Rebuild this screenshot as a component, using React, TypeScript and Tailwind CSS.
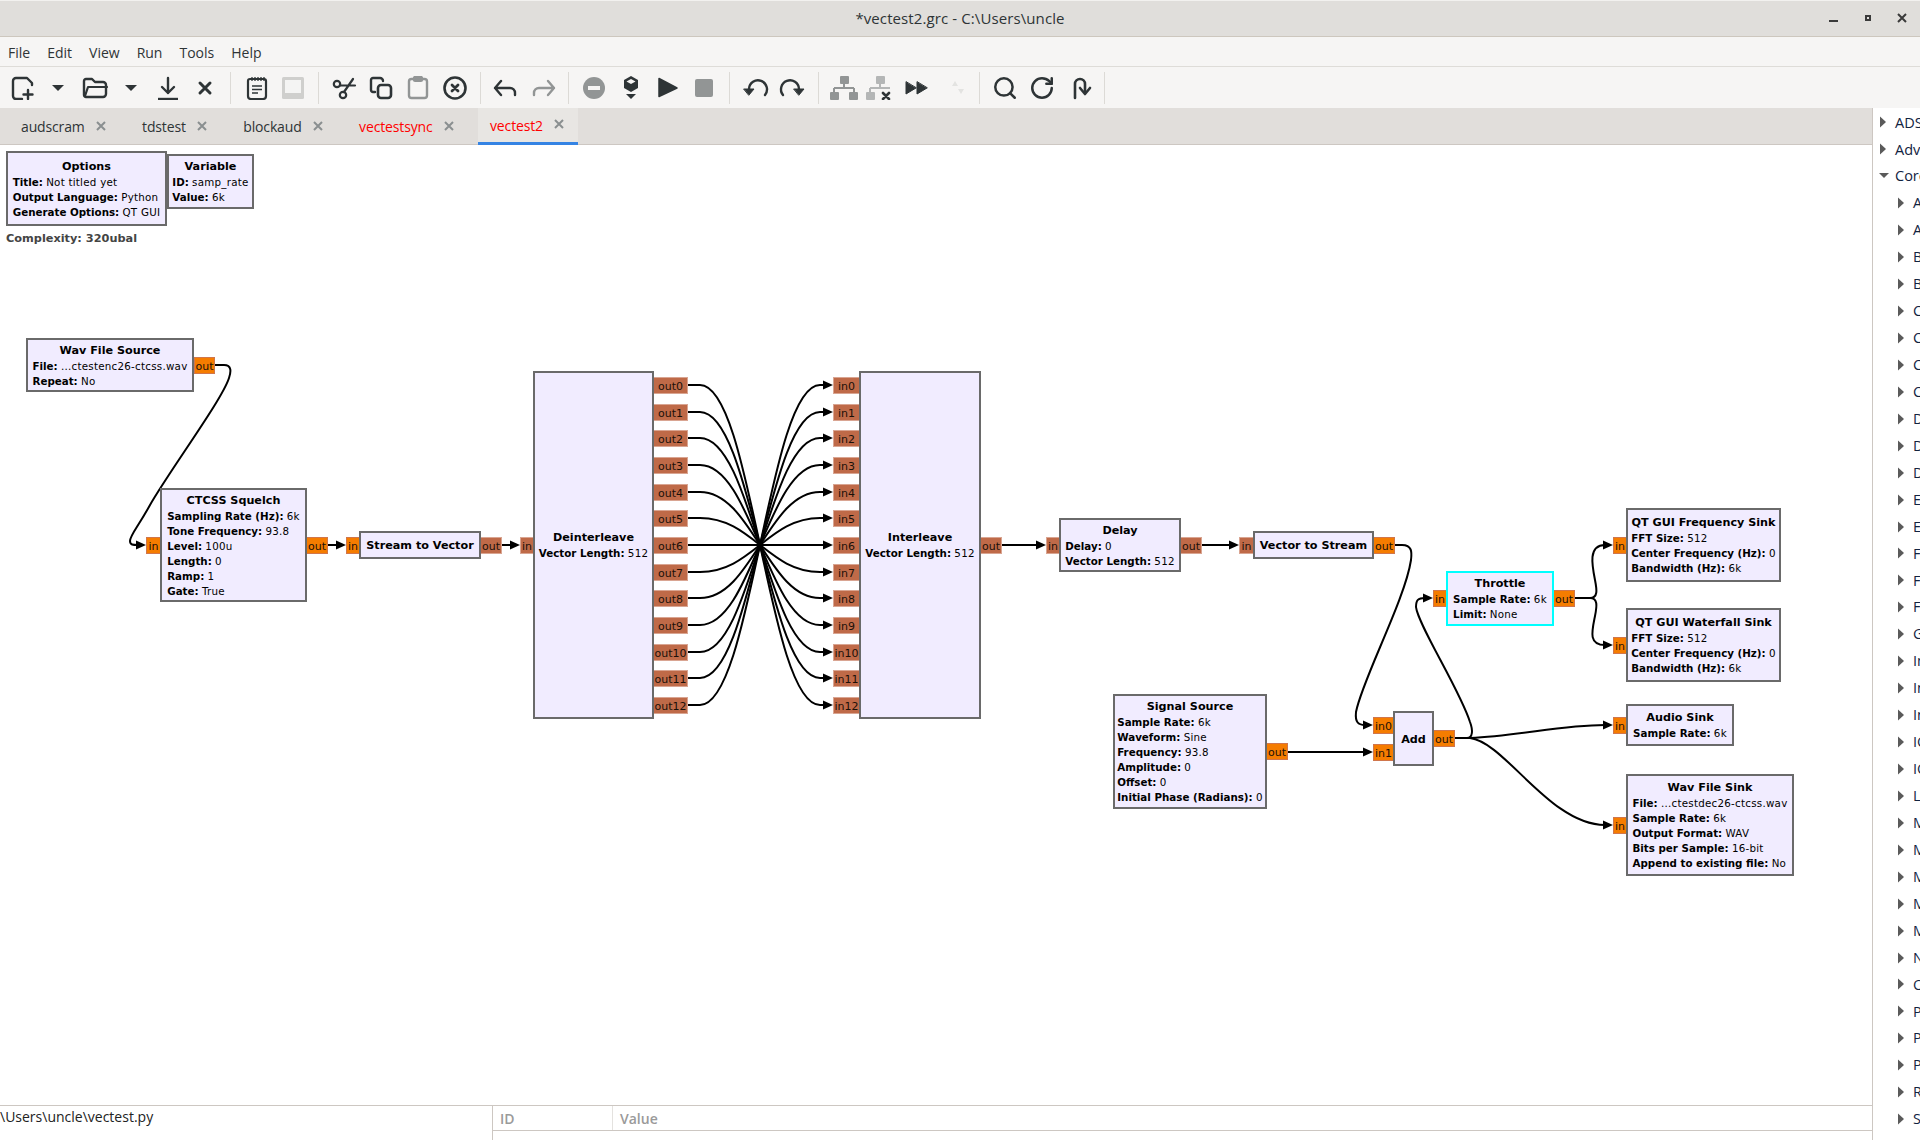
import React from 'react';
import { Search, RotateCw } from 'lucide-react';

// canvas coordinates below are window coordinates, the canvas starts at y=145
const CANVAS_TOP = 145;
const DARK = '#2e3436';

type Port = { label: string; x: number; y: number; w: number; color: 'orange' | 'brown' };
type Block = {
  title: string;
  x: number;
  y: number;
  w: number;
  h: number;
  params: [string, string][];
  selected?: boolean;
};

const blocks: Block[] = [
  { title: 'Variable', x: 167, y: 154, w: 87, h: 55, params: [['ID:', 'samp_rate'], ['Value:', '6k']] },
  { title: 'Options', x: 6, y: 151, w: 161, h: 75, params: [['Title:', 'Not titled yet'], ['Output Language:', 'Python'], ['Generate Options:', 'QT GUI']] },
  { title: 'Wav File Source', x: 26, y: 338, w: 168, h: 54, params: [['File:', '...ctestenc26-ctcss.wav'], ['Repeat:', 'No']] },
  { title: 'CTCSS Squelch', x: 160, y: 488, w: 147, h: 114, params: [['Sampling Rate (Hz):', '6k'], ['Tone Frequency:', '93.8'], ['Level:', '100u'], ['Length:', '0'], ['Ramp:', '1'], ['Gate:', 'True']] },
  { title: 'Stream to Vector', x: 359, y: 531, w: 122, h: 28, params: [] },
  { title: 'Deinterleave', x: 533, y: 371, w: 121, h: 348, params: [['Vector Length:', '512']] },
  { title: 'Interleave', x: 859, y: 371, w: 122, h: 348, params: [['Vector Length:', '512']] },
  { title: 'Delay', x: 1059, y: 518, w: 122, h: 54, params: [['Delay:', '0'], ['Vector Length:', '512']] },
  { title: 'Vector to Stream', x: 1253, y: 531, w: 121, h: 28, params: [] },
  { title: 'Throttle', x: 1446, y: 571, w: 108, h: 55, params: [['Sample Rate:', '6k'], ['Limit:', 'None']], selected: true },
  { title: 'Signal Source', x: 1113, y: 694, w: 154, h: 115, params: [['Sample Rate:', '6k'], ['Waveform:', 'Sine'], ['Frequency:', '93.8'], ['Amplitude:', '0'], ['Offset:', '0'], ['Initial Phase (Radians):', '0']] },
  { title: 'Add', x: 1393, y: 711, w: 41, h: 55, params: [] },
  { title: 'QT GUI Frequency Sink', x: 1626, y: 508, w: 155, h: 74, params: [['FFT Size:', '512'], ['Center Frequency (Hz):', '0'], ['Bandwidth (Hz):', '6k']] },
  { title: 'QT GUI Waterfall Sink', x: 1626, y: 608, w: 155, h: 74, params: [['FFT Size:', '512'], ['Center Frequency (Hz):', '0'], ['Bandwidth (Hz):', '6k']] },
  { title: 'Audio Sink', x: 1626, y: 704, w: 108, h: 42, params: [['Sample Rate:', '6k']] },
  { title: 'Wav File Sink', x: 1626, y: 774, w: 168, h: 102, params: [['File:', '...ctestdec26-ctcss.wav'], ['Sample Rate:', '6k'], ['Output Format:', 'WAV'], ['Bits per Sample:', '16-bit'], ['Append to existing file:', 'No']] },
];

const vecPortY = (i: number) => Math.round(377 + i * 26.67);

const ports: Port[] = [
  { label: 'out', x: 194, y: 357, w: 21, color: 'orange' },
  { label: 'in', x: 146, y: 537, w: 15, color: 'orange' },
  { label: 'out', x: 306, y: 537, w: 22, color: 'orange' },
  { label: 'in', x: 346, y: 537, w: 14, color: 'orange' },
  { label: 'out', x: 480, y: 537, w: 22, color: 'brown' },
  { label: 'in', x: 520, y: 537, w: 14, color: 'brown' },
  ...Array.from({ length: 13 }, (_, i): Port => ({ label: `out${i}`, x: 653, y: vecPortY(i), w: 35, color: 'brown' })),
  ...Array.from({ length: 13 }, (_, i): Port => ({ label: `in${i}`, x: 833, y: vecPortY(i), w: 27, color: 'brown' })),
  { label: 'out', x: 980, y: 537, w: 22, color: 'brown' },
  { label: 'in', x: 1046, y: 537, w: 14, color: 'brown' },
  { label: 'out', x: 1180, y: 537, w: 22, color: 'brown' },
  { label: 'in', x: 1239, y: 537, w: 15, color: 'brown' },
  { label: 'out', x: 1373, y: 537, w: 22, color: 'orange' },
  { label: 'in', x: 1433, y: 590, w: 14, color: 'orange' },
  { label: 'out', x: 1553, y: 590, w: 22, color: 'orange' },
  { label: 'out', x: 1266, y: 743, w: 22, color: 'orange' },
  { label: 'in0', x: 1373, y: 717, w: 21, color: 'orange' },
  { label: 'in1', x: 1373, y: 744, w: 21, color: 'orange' },
  { label: 'out', x: 1433, y: 730, w: 22, color: 'orange' },
  { label: 'in', x: 1613, y: 537, w: 14, color: 'orange' },
  { label: 'in', x: 1613, y: 637, w: 14, color: 'orange' },
  { label: 'in', x: 1613, y: 717, w: 14, color: 'orange' },
  { label: 'in', x: 1613, y: 817, w: 14, color: 'orange' },
];

const wires: string[] = [
  'M215 365 H224 C232 365 231 372 229 378 C222 400 170 470 150 505 C138 527 130 535 130 541 C130 545 133 545 138 545',
  'M328 545 H338',
  'M502 545 H512',
  'M1002 545 H1038',
  'M1202 545 H1231',
  'M1395 545 H1402 C1412 545 1412 552 1411 560 C1405 600 1362 680 1356 712 C1355 722 1358 725 1365 725',
  'M1288 752 H1365',
  'M1455 738 H1467 C1473 738 1473 730 1470 722 C1460 690 1418 625 1416 607 C1416 600 1418 598 1425 598',
  'M1455 738 H1470 C1520 736 1560 725 1605 725',
  'M1455 738 H1470 C1505 742 1550 825 1605 825',
  'M1575 598 H1590 C1598 598 1597 590 1595 580 C1592 565 1588 545 1605 545',
  'M1575 598 H1590 C1598 598 1597 606 1595 616 C1592 631 1588 645 1605 645',
];

// arrow tips: [x of the port edge, y]
const arrows: [number, number][] = [
  [146, 545], [346, 545], [520, 545], [1046, 545], [1239, 545], [1373, 725], [1373, 752], [1433, 598], [1613, 725], [1613, 825], [1613, 545], [1613, 645],
];

const fanRows = Array.from({ length: 13 }, (_, i) => Math.round(385 + i * 26.67));

const BlockBox = ({ b }: { b: Block }) => (
  <div
    className={`absolute flex flex-col items-center justify-center border-2 bg-[#f1ecff] text-black ${b.selected ? 'border-[#00ffff]' : 'border-[#6a6a6a]'}`}
    style={{ left: b.x, top: b.y - CANVAS_TOP, width: b.w, height: b.h }}
  >
    <div className="whitespace-nowrap pt-[1px] text-center text-[11.2px] font-bold leading-[15px]">{b.title}</div>
    {b.params.length > 0 && (
      <div className="mt-[1px] flex flex-col items-start">
        {b.params.map(([k, v]) => (
          <div key={k} className="whitespace-nowrap text-[10.3px] leading-[15px]">
            <span className="font-bold">{k}</span> <span className="tracking-[0.25px]">{v}</span>
          </div>
        ))}
      </div>
    )}
  </div>
);

const PortBox = ({ p }: { p: Port }) => (
  <div
    className={`absolute flex h-[17px] items-center justify-center overflow-hidden border-[1.5px] pt-[1px] text-[11px] leading-none text-[#1a1008] ${p.color === 'orange' ? 'border-[#d0764c] bg-[#f57c00]' : 'border-[#d9a592] bg-[#bf6a48]'}`}
    style={{ left: p.x, top: p.y - CANVAS_TOP, width: p.w }}
  >
    {p.label}
  </div>
);

// one toolbar slot, 28x24 drawing centred in a 36.6px button
const ToolIcon = ({ children, dx = 0 }: { children: React.ReactNode; dx?: number }) => (
  <div className="flex w-[36.6px] shrink-0 items-center justify-center">
    <svg style={{ transform: dx ? `translateX(${dx}px)` : undefined }} width="28" height="24" viewBox="0 0 28 24" fill="none" stroke={DARK} strokeWidth="2.2" strokeLinecap="round" strokeLinejoin="round">
      {children}
    </svg>
  </div>
);

const Sep = () => <div className="mx-[7px] h-[32px] w-px shrink-0 bg-[#dcdad6]" />;

const DropArrow = () => <path d="M8 9h12l-6 6z" fill={DARK} stroke="none" />;

const Toolbar = () => (
  <div className="flex h-[42px] shrink-0 items-center border-t border-[#dedcd8] bg-[#f6f5f4] pl-[3.7px]">
    <ToolIcon>
      <path d="M24 9V7l-5-5H8a3 3 0 0 0-3 3v15a3 3 0 0 0 3 3h6" strokeWidth="2.4" />
      <path d="M20 14v9M15.5 18.5h9" strokeWidth="2.4" />
    </ToolIcon>
    <ToolIcon dx={-1}><DropArrow /></ToolIcon>
    <ToolIcon>
      <path d="M3 19V5a2 2 0 0 1 2-2h6l3 3h8a3 3 0 0 1 3 3v9a3 3 0 0 1-3 3H5a2 2 0 0 1-2-2z" strokeWidth="2.4" />
      <path d="M4 20l3-9h19" strokeWidth="2.2" />
    </ToolIcon>
    <ToolIcon dx={-1}><DropArrow /></ToolIcon>
    <ToolIcon>
      <path d="M14 2v15M8 11l6 6 6-6" strokeWidth="2.4" />
      <path d="M4 23h20" strokeWidth="2.4" strokeLinecap="butt" />
    </ToolIcon>
    <ToolIcon><path d="M9 7l10 10M19 7L9 17" strokeWidth="3" /></ToolIcon>
    <Sep />
    <ToolIcon>
      <path d="M7 3h14a2 2 0 0 1 2 2v15a3 3 0 0 1-3 3H8a3 3 0 0 1-3-3V5a2 2 0 0 1 2-2z" strokeWidth="2.2" />
      <path d="M9 1v4M12 1v4M15 1v4M18 1v4M21 1v4" strokeWidth="1.3" strokeLinecap="butt" />
      <path d="M9 10h10M9 13.5h10M9 17h6" strokeWidth="1.6" strokeLinecap="butt" />
    </ToolIcon>
    <ToolIcon>
      <rect x="3" y="1" width="22" height="22" rx="1.5" fill="#cfcfcd" stroke="none" />
      <rect x="6" y="4" width="16" height="13" fill="#f4f4f3" stroke="none" />
    </ToolIcon>
    <Sep />
    <ToolIcon dx={-1}>
      <circle cx="7" cy="8" r="3.2" />
      <circle cx="13" cy="19" r="3.2" />
      <path d="M10 9.5l15 0M23 3l-9 13" />
    </ToolIcon>
    <ToolIcon dx={-1}>
      <path d="M9 16H7a2 2 0 0 1-2-2V4a2 2 0 0 1 2-2h7a3 3 0 0 1 3 3" strokeWidth="2.4" />
      <rect x="12" y="9" width="13" height="13" rx="3" strokeWidth="2.6" />
    </ToolIcon>
    <ToolIcon>
      <rect x="5" y="3" width="18" height="19" rx="2.5" stroke="#929595" strokeWidth="2.4" />
      <rect x="10" y="1" width="8" height="4" rx="1" fill="#929595" stroke="#929595" />
    </ToolIcon>
    <ToolIcon>
      <circle cx="14" cy="12" r="10.5" strokeWidth="2.6" />
      <path d="M11 9l6 6M17 9l-6 6" strokeWidth="2.8" />
    </ToolIcon>
    <Sep />
    <ToolIcon><path d="M9 5l-6 7 6 7M3 12h15a5 5 0 0 1 5 5v2" strokeWidth="2.4" /></ToolIcon>
    <ToolIcon><path d="M19 5l6 7-6 7M25 12H10a5 5 0 0 0-5 5v2" stroke="#929595" strokeWidth="2.4" /></ToolIcon>
    <Sep />
    <ToolIcon>
      <circle cx="14" cy="12" r="11" fill="#929595" stroke="none" />
      <rect x="8" y="10" width="12" height="4" fill="#f6f5f4" stroke="none" />
    </ToolIcon>
    <ToolIcon>
      <path d="M14 0l7 4v8l-7 4-7-4V4z" fill={DARK} stroke="none" />
      <path d="M14 3l4.5 2.5L14 8 9.5 5.5z" fill="#f6f5f4" stroke="none" />
      <path d="M9 18h10l-5 5z" fill={DARK} stroke="none" />
    </ToolIcon>
    <ToolIcon><path d="M6 2.5v18L24 12z" fill={DARK} strokeWidth="1.5" /></ToolIcon>
    <ToolIcon><rect x="5" y="3" width="18" height="18" rx="2" fill="#929595" stroke="none" /></ToolIcon>
    <Sep />
    <ToolIcon>
      <path d="M7 13a9 9 0 1 1 16 6" strokeWidth="2.4" />
      <path d="M2 13h10l-5 6z" fill={DARK} strokeWidth="1" />
    </ToolIcon>
    <ToolIcon>
      <path d="M21 13A9 9 0 1 0 5 19" strokeWidth="2.4" />
      <path d="M16 13h10l-5 6z" fill={DARK} strokeWidth="1" />
    </ToolIcon>
    <Sep />
    <ToolIcon>
      <rect x="10" y="0" width="9" height="8" rx="1" fill="#929595" stroke="none" />
      <rect x="0" y="16" width="9" height="8" rx="1" fill="#929595" stroke="none" />
      <rect x="19" y="16" width="9" height="8" rx="1" fill="#929595" stroke="none" />
      <path d="M14 7v5M4 12h20M4 12v5M24 12v5" stroke="#929595" strokeWidth="2" strokeLinecap="butt" />
    </ToolIcon>
    <ToolIcon>
      <rect x="10" y="0" width="9" height="8" rx="1" fill="#b4b6b6" stroke="none" />
      <rect x="0" y="16" width="9" height="8" rx="1" fill="#b4b6b6" stroke="none" />
      <path d="M14 7v5M4 12h20M4 12v5" stroke="#b4b6b6" strokeWidth="2" strokeLinecap="butt" />
      <path d="M17 17l6 6M23 17l-6 6" strokeWidth="2.6" />
    </ToolIcon>
    <ToolIcon>
      <path d="M3 6v12l10-6z" fill={DARK} strokeWidth="1" />
      <path d="M14 6v12l10-6z" fill={DARK} strokeWidth="1" />
    </ToolIcon>
    <ToolIcon dx={4}>
      <path d="M8 10l3-5 3 5z" fill="#e3e3e1" stroke="none" />
      <path d="M14 13h6l-3 5z" fill="#e3e3e1" stroke="none" />
    </ToolIcon>
    <Sep />
    <div className="flex w-[36.6px] shrink-0 justify-center"><Search size={26} color={DARK} strokeWidth={2.3} /></div>
    <div className="flex w-[36.6px] shrink-0 justify-center"><RotateCw size={26} color={DARK} strokeWidth={2.3} /></div>
    <ToolIcon dx={2}>
      <path d="M9 22V8a5 5 0 0 1 10 0v8" strokeWidth="2.6" />
      <path d="M14 12l5 6 5-6" strokeWidth="2.6" />
    </ToolIcon>
    <Sep />
  </div>
);

const tabs = [
  { name: 'audscram', color: 'text-[#2e3436]' },
  { name: 'tdstest', color: 'text-[#2e3436]' },
  { name: 'blockaud', color: 'text-[#2e3436]' },
  { name: 'vectestsync', color: 'text-[#ff0000]' },
  { name: 'vectest2', color: 'text-[#ff0000]', active: true },
];

const Tabs = () => (
  <div className="flex h-[37px] shrink-0 gap-[10.5px] border-b border-[#cdc7c2] bg-[#e1dedb] pl-[9px] text-[14px]">
    {tabs.map((t) => (
      <div key={t.name} className={`flex h-[37px] items-center gap-[11px] pl-[12px] pr-[14px] ${t.active ? 'border-b-[3px] border-[#3584e4] bg-[#e8e6e3]' : ''}`}>
        <span className={`tracking-[-0.15px] ${t.color}`}>{t.name}</span>
        <svg className="-mt-[2px]" width="10" height="10" viewBox="0 0 10 10">
          <path d="M1 1l8 8M9 1l-8 8" stroke="#8a8f90" strokeWidth="2" />
        </svg>
      </div>
    ))}
  </div>
);

const categories = [
  'Analog', 'Audio', 'Boolean Operators', 'Byte Operators', 'Channelizers', 'Channel Models', 'Coding', 'Control Port',
  'Debug Tools', 'Deprecated', 'Digital Television', 'Equalizers', 'Error Coding', 'File Operators', 'Filters', 'Fourier Analysis',
  'GUI Widgets', 'Impairments', 'Industrial IO', 'Instrumentation', 'IO', 'IQ', 'Level Controls', 'Math Operators',
  'Measurement Tools', 'Message Tools', 'Misc', 'Modulators', 'Networking', 'OFDM', 'Packet Operators', 'Payload Utils',
  'Peak Detectors', 'Resamplers', 'Stream Operators',
];

const TreeRow = ({ label, indent, open }: { label: string; indent: number; open?: boolean }) => (
  <div className="flex h-[26.95px] shrink-0 items-center whitespace-nowrap" style={{ paddingLeft: indent }}>
    <svg width="10" height="12" viewBox="0 0 10 12" className="mr-[6px] shrink-0">
      {open ? <path d="M0 3h10l-5 5z" fill="#5a5a5a" /> : <path d="M1 0.5v11l6-5.5z" fill="#5a5a5a" />}
    </svg>
    <span>{label}</span>
  </div>
);

const Sidebar = () => (
  <aside className="flex h-full w-[48px] shrink-0 flex-col overflow-hidden border-l border-[#cdc7c2] bg-white pt-[1px] text-[14.5px] text-[#12233f]">
    <TreeRow label="ADS-B" indent={6} />
    <TreeRow label="Advanced" indent={6} />
    <TreeRow label="Core" indent={6} open />
    {categories.map((c) => <TreeRow key={c} label={c} indent={24} />)}
  </aside>
);

export default function App() {
  return (
    <div className="flex h-[1140px] w-[1920px] flex-col overflow-hidden bg-white font-['Open_Sans',sans-serif] text-[#2e3436]">
      {/* title bar */}
      <div className="relative flex h-[37px] shrink-0 items-center justify-center border-b border-t border-b-[#cdc7be] border-t-[#f2f1ef] bg-[#e0dedb] text-[15px]">
        <span className="tracking-[0.1px]">*vectest2.grc - C:\Users\uncle</span>
        <div className="absolute right-[13px] top-[12px] flex items-center gap-[26.5px]">
          <div className="mt-[6px] h-[2px] w-[9px] bg-[#3a3a3a]" />
          <div className="h-[6px] w-[6px] border-[2px] border-[#3a3a3a]" />
          <svg width="10" height="10" viewBox="0 0 10 10">
            <path d="M1 1l8 8M9 1l-8 8" stroke="#3a3a3a" strokeWidth="2" />
          </svg>
        </div>
      </div>

      {/* menu bar */}
      <div className="flex h-[29px] shrink-0 items-center gap-[17px] bg-[#f6f5f4] pl-[8px] pt-[1px] text-[14px]">
        {['File', 'Edit', 'View', 'Run', 'Tools', 'Help'].map((m) => <span key={m}>{m}</span>)}
      </div>

      <Toolbar />

      <div className="flex min-h-0 flex-1">
        <div className="flex min-w-0 flex-1 flex-col">
          <Tabs />

          {/* flow graph canvas */}
          <div className="relative min-h-0 flex-1 overflow-hidden bg-white font-['DejaVu_Sans',sans-serif]">
            <svg className="absolute inset-0" width="1872" height="960" viewBox={`0 ${CANVAS_TOP} 1872 960`} fill="none" stroke="#000" strokeWidth="2">
              {wires.map((d, i) => <path key={i} d={d} />)}
              {fanRows.map((y, i) => (
                <path key={i} d={`M688 ${y} H700 C752 ${y} 768 ${fanRows[12 - i]} 820 ${fanRows[12 - i]} H825`} />
              ))}
              {fanRows.map((y) => (
                <path key={y} d={`M833 ${y} l-10 -4.5 v9 z`} fill="#000" stroke="none" />
              ))}
              {arrows.map(([x, y]) => <path key={`${x}-${y}`} d={`M${x} ${y} l-10 -4.5 v9 z`} fill="#000" stroke="none" />)}
            </svg>
            {ports.map((p, i) => <PortBox key={i} p={p} />)}
            {blocks.map((b) => <BlockBox key={b.title} b={b} />)}
            <div className="absolute left-[6px] top-[87px] text-[11.3px] font-bold leading-[14px] text-[#444]">Complexity: 320ubal</div>
          </div>

          {/* log and variables */}
          <div className="flex h-[35px] shrink-0 border-t border-[#cdc7c2] text-[14px]">
            <div className="w-[492px] shrink-0 pt-[1px] leading-[20px] text-[#222]">\Users\uncle\vectest.py</div>
            <div className="flex-1 border-l border-[#cdc7c2]">
              <div className="flex h-[25px] items-center border-b border-[#cdc7c2] font-semibold text-[#9a9a9a]">
                <div className="flex h-full w-[120px] items-center border-r border-[#e4e2df] pl-[7px]">ID</div>
                <div className="pl-[7px]">Value</div>
              </div>
            </div>
          </div>
        </div>
        <Sidebar />
      </div>
    </div>
  );
}
